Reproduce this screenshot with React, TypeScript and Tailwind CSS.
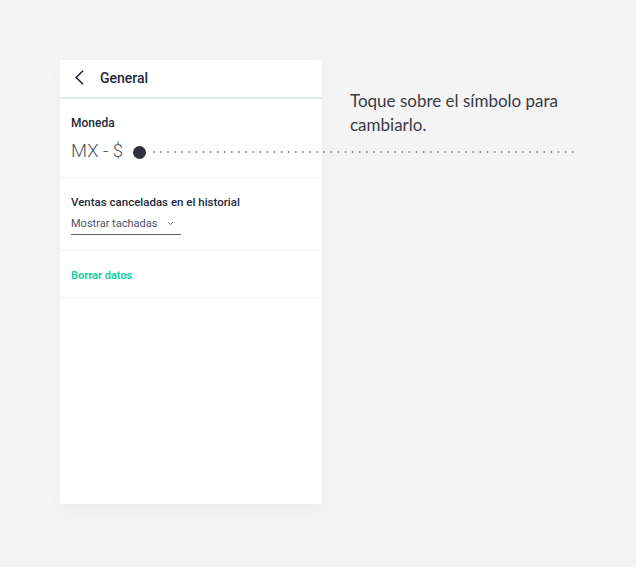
import { ChevronDown } from "lucide-react";

function Header() {
  return (
    <div className="h-[37px] flex items-center pl-[40px] relative border-b-2 border-[#e1e7ee] box-content">
      <svg width="9" height="15" viewBox="0 0 9 15" className="absolute left-[15px] top-[10px]">
        <polyline points="8,0.8 1.2,7.5 8,14.2" fill="none" stroke="#1f2937" strokeWidth="1.6" />
      </svg>
      <span className="text-[14px] font-medium text-[#1e2a3b]">General</span>
    </div>
  );
}

export default function App() {
  return (
    <div className="min-h-[567px] w-[636px] bg-[#f4f4f4] relative font-['Roboto',sans-serif] flex pt-[60px] pl-[60px]">
      <div className="w-[262px] h-[444px] bg-white shadow-[0_6px_18px_rgba(0,0,0,0.035)] flex flex-col">
        <Header />

        {/* moneda */}
        <div className="h-[79px] border-b border-[#f2f2f2] px-[11px] pt-[17px]">
          <div className="text-[12px] font-medium text-[#1e2a3b] leading-[14px]">Moneda</div>
          <div className="flex items-center mt-[9px] h-[26px]">
            <span className="text-[18.5px] font-light text-[#4b5563]">MX - $</span>
            <span className="ml-[10px] w-[13px] h-[13px] rounded-full bg-[#2f3140]" />
          </div>
        </div>

        {/* ventas canceladas */}
        <div className="h-[73px] border-b border-[#f2f2f2] px-[11px] pt-[17px]">
          <div className="text-[11.5px] font-medium text-[#1e2a3b] leading-[14px]">Ventas canceladas en el historial</div>
          <div className="mt-[8px] w-[110px] h-[18px] border-b border-[#5b6270] flex items-start justify-between pr-[6px]">
            <span className="text-[11px] text-[#4b5563] leading-[14px]">Mostrar tachadas</span>
            <ChevronDown size={9} strokeWidth={2.2} className="text-[#4b5563] mt-[2px]" />
          </div>
        </div>

        {/* borrar */}
        <div className="h-[47px] border-b border-[#f2f2f2] px-[11px] pt-[4px] flex items-center">
          <span className="text-[11px] font-bold text-[#23d0a6]">Borrar datos</span>
        </div>
      </div>

      <div className="ml-[28px] pt-[29px] font-['Lato',sans-serif] text-[17px] leading-[24px] text-[#3a3b44] w-[250px]">
        Toque sobre el símbolo para cambiarlo.
      </div>

      <svg width="424" height="4" className="absolute left-[150px] top-[150px]">
        <line x1="3" y1="2" x2="424" y2="2" stroke="#6b6d78" strokeWidth="1.6" strokeDasharray="1.6 5.5" />
      </svg>
    </div>
  );
}
